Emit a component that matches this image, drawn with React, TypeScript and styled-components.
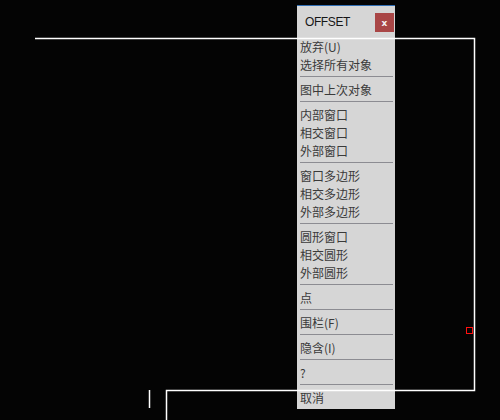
import styled, { createGlobalStyle } from "styled-components";

const Global = createGlobalStyle`
    html, body {
        margin: 0;
        padding: 0;
        background: #040404;
    }
`;

const Canvas = styled.div`
    position: relative;
    width: 500px;
    height: 420px;
    background: #040404;
    overflow: hidden;
`;

const Drawing = styled.svg`
    position: absolute;
    left: 0;
    top: 0;
    z-index: 2;
    pointer-events: none;
`;

const Menu = styled.div`
    position: absolute;
    left: 297px;
    top: 5px;
    width: 98px;
    height: 403px;
    background: #d6d6d6;
    border-top: 1px solid #2f6db3;
    display: flex;
    flex-direction: column;
    font-family: "Noto Sans CJK SC", "Liberation Sans", sans-serif;
    z-index: 1;
`;

const Header = styled.div`
    height: 31px;
    display: flex;
    align-items: center;
    justify-content: space-between;
    padding-left: 8px;
    padding-right: 1px;
`;

const Title = styled.span`
    font-family: "Liberation Sans", Arial, sans-serif;
    font-size: 12px;
    letter-spacing: -0.4px;
    color: #161616;
    padding-top: 1px;
`;

const Close = styled.div`
    width: 19px;
    height: 19px;
    background: #a94646;
    color: #f4f0f0;
    display: flex;
    align-items: center;
    justify-content: center;
    font-family: "DejaVu Sans", sans-serif;
    font-size: 9px;
    font-weight: bold;
    margin-top: 2px;
`;

const Item = styled.div`
    box-sizing: border-box;
    height: 18px;
    line-height: 18px;
    padding: 1px 0 0 3px;
    font-size: 12px;
    color: #3a3a3a;
    white-space: nowrap;
`;

const Separator = styled.div`
    height: 7px;
    display: flex;
    align-items: center;
    padding: 0 2px 0 3px;

    &::after {
        content: "";
        flex: 1;
        height: 1px;
        background: #8c8c92;
    }
`;

type Entry = string | null;

const entries: Entry[] = [
    "放弃(U)",
    "选择所有对象",
    null,
    "图中上次对象",
    null,
    "内部窗口",
    "相交窗口",
    "外部窗口",
    null,
    "窗口多边形",
    "相交多边形",
    "外部多边形",
    null,
    "圆形窗口",
    "相交圆形",
    "外部圆形",
    null,
    "点",
    null,
    "围栏(F)",
    null,
    "隐含(I)",
    null,
    "?",
    null,
    "取消",
];

export default function App() {
    return (
        <>
            <Global />
            <Canvas>
                <Menu>
                    <Header>
                        <Title>OFFSET</Title>
                        <Close>x</Close>
                    </Header>
                    {entries.map((e, i) =>
                        e === null ? <Separator key={i} /> : <Item key={i}>{e}</Item>
                    )}
                </Menu>
                <Drawing width={500} height={420} viewBox="0 0 500 420">
                    <g stroke="#ffffff" strokeWidth={1.5} fill="none">
                        <path d="M35 38.5 H474.5 V390.5 H166.5 V420" />
                        <path d="M149.5 390 V408" />
                    </g>
                    <rect x={466.5} y={327.5} width={6} height={6} fill="none" stroke="#ff1010" strokeWidth={1} />
                </Drawing>
            </Canvas>
        </>
    );
}
